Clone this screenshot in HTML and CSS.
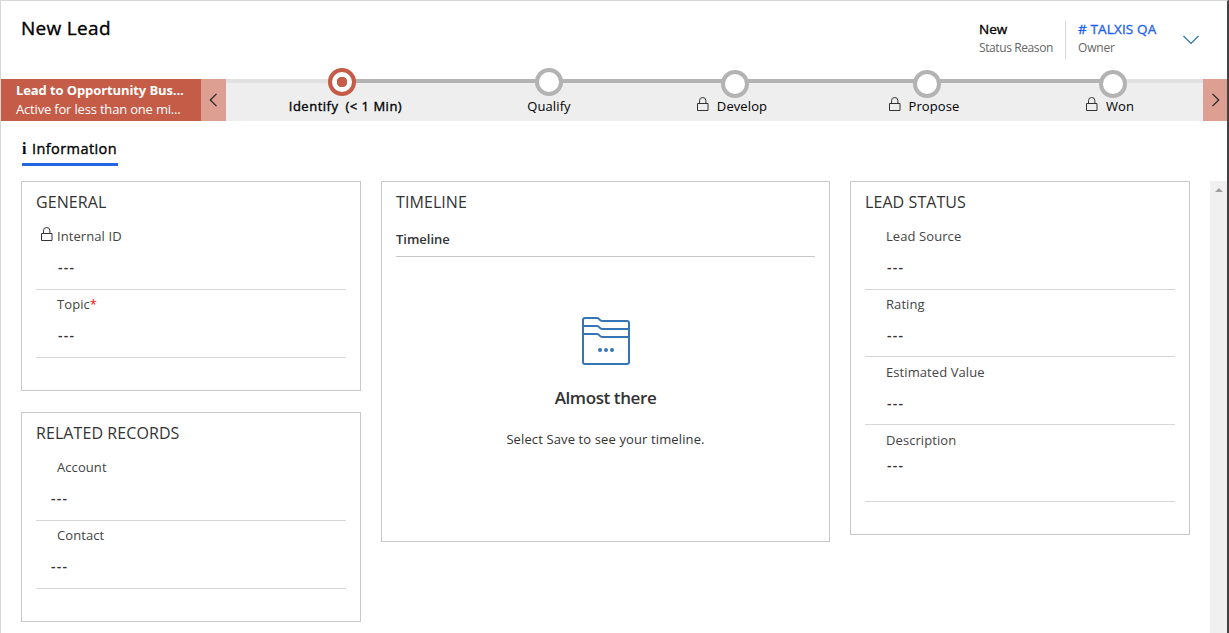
FILE: index.html
```html
<!DOCTYPE html>
<html lang="en">
<head>
<meta charset="utf-8">
<title>New Lead</title>
<link rel="stylesheet" href="styles.css">
</head>
<body>
<svg class="defs" width="0" height="0">
  <symbol id="lock" viewBox="0 0 12 15">
    <path d="M.5 6.500h10.500v7H.5zM2.500 6.500V3.700a3.200 3.200 0 0 1 6.400 0v2.800" fill="none" stroke="currentColor"/>
  </symbol>
</svg>
<div class="page">
  <header class="header">
    <h1 class="title">New Lead</h1>
    <div class="facts">
      <div class="fact fact-status"><span class="fact-value">New</span><span class="fact-label">Status Reason</span></div>
      <div class="fact fact-owner"><a class="fact-value fact-link">#&nbsp;TALXIS QA</a><span class="fact-label">Owner</span></div>
      <svg class="chevron" width="18" height="10" viewBox="0 0 18 10"><path d="M1.500 1 9 8.500 16.500 1" fill="none" stroke="#2a72a8" stroke-width="1.200"/></svg>
    </div>
  </header>

  <section class="process">
    <div class="process-name"><strong class="process-title">Lead to Opportunity Bus...</strong><span class="process-time">Active for less than one mi...</span></div>
    <button class="nav nav-prev"><svg width="9" height="14" viewBox="0 0 9 14"><path d="M7.500.8 1.300 7l6.200 6.200" fill="none" stroke="#222" stroke-width="1.200"/></svg></button>
    <div class="stages">
      <div class="stage stage-active"><span class="dot"></span><span class="stage-label"><span>Identify</span><span class="duration">(&lt; 1 Min)</span></span></div>
      <div class="stage"><span class="dot"></span><span class="stage-label">Qualify</span></div>
      <div class="stage stage-locked"><span class="dot"></span><span class="stage-label"><svg class="lock"><use href="#lock"/></svg>Develop</span></div>
      <div class="stage stage-locked"><span class="dot"></span><span class="stage-label"><svg class="lock"><use href="#lock"/></svg>Propose</span></div>
      <div class="stage stage-locked"><span class="dot"></span><span class="stage-label"><svg class="lock"><use href="#lock"/></svg>Won</span></div>
    </div>
    <button class="nav nav-next"><svg width="9" height="14" viewBox="0 0 9 14"><path d="M1.500.8 7.700 7l-6.200 6.200" fill="none" stroke="#222" stroke-width="1.200"/></svg></button>
  </section>

  <nav class="tabs"><a class="tab"><span class="tab-icon">i</span><span class="tab-text">Information</span></a></nav>

  <main class="content">
    <div class="columns">
      <div class="column">
        <section class="card">
          <h2 class="card-title">GENERAL</h2>
          <div class="field"><div class="label"><svg class="lock"><use href="#lock"/></svg>Internal ID</div><div class="value">---</div></div>
          <div class="field"><div class="label">Topic<span class="required">*</span></div><div class="value">---</div></div>
        </section>
        <section class="card related">
          <h2 class="card-title">RELATED RECORDS</h2>
          <div class="field"><div class="label">Account</div><div class="value">---</div></div>
          <div class="field"><div class="label">Contact</div><div class="value">---</div></div>
        </section>
      </div>
      <section class="card timeline">
        <h2 class="card-title">TIMELINE</h2>
        <h3 class="timeline-heading">Timeline</h3>
        <div class="empty">
          <svg width="48" height="48" viewBox="0 0 48 48" fill="none" stroke="#3575b5" stroke-width="2">
            <path d="M1 45V3q0-2 2-2h12q1.500 0 2.500 1.500T20.500 4H45q2 0 2 2v39q0 2-2 2H3q-2 0-2-2zM1 9h14q1.500 0 2.500 1.500T20.500 12H47M1 17h14q1.500 0 2.500 1.500T20.500 20H47"/>
            <g fill="#3575b5" stroke="none"><circle cx="18" cy="33" r="2"/><circle cx="24" cy="33" r="2"/><circle cx="30" cy="33" r="2"/></g>
          </svg>
          <strong class="empty-title">Almost there</strong>
          <span class="empty-text">Select Save to see your timeline.</span>
        </div>
      </section>
      <section class="card status">
        <h2 class="card-title">LEAD STATUS</h2>
        <div class="field"><div class="label">Lead Source</div><div class="value">---</div></div>
        <div class="field field-short"><div class="label">Rating</div><div class="value">---</div></div>
        <div class="field field-low"><div class="label">Estimated Value</div><div class="value">---</div></div>
        <div class="field field-low field-long"><div class="label">Description</div><div class="value">---</div></div>
      </section>
    </div>
    <div class="scrollbar"><svg width="8" height="4" viewBox="0 0 8 4"><path d="M0 4 4 0l4 4z" fill="#a0a0a0"/></svg></div>
  </main>
</div>
</body>
</html>
```
FILE: styles.css
```css
* { box-sizing: border-box; }
body { margin: 0; font-family: "Open Sans", "Noto Sans", sans-serif; font-size: 13px; color: #333; background: #fff; }
h1, h2, h3 { margin: 0; }
.defs { display: none; }
.page { width: 1229px; height: 633px; overflow: hidden; display: flex; flex-direction: column; border-top: 1px solid #d6d6d6; border-left: 1px solid #d6d6d6; border-right: 2px solid #434040; }

.header { height: 78px; flex: none; display: flex; justify-content: space-between; padding: 13px 27px 0 20px; }
.title { font-size: 19px; font-weight: 400; -webkit-text-stroke: 0.350px #000; line-height: 28px; color: #000; letter-spacing: 0.300px; }
.facts { display: flex; height: 45px; }
.fact { display: flex; flex-direction: column; padding-top: 6px; white-space: nowrap; }
.fact-status { width: 86px; }
.fact-owner { width: 117px; padding: 0 0 0 12px; border-left: 1px solid #d6d6d6; margin-top: 7px; height: 38px; }
.fact-value { font-weight: 400; -webkit-text-stroke: 0.350px currentColor; font-size: 13.500px; color: #000; line-height: 18px; }
.fact-owner .fact-value { margin-top: -1px; }
.fact-link { color: #1f62f0; letter-spacing: 0.150px; }
.fact-label { font-size: 12px; color: #666; line-height: 18px; margin-top: 1px; letter-spacing: -0.400px; }
.fact-owner .fact-label { letter-spacing: -0.200px; }
.chevron { margin-top: 21px; }

.process { height: 42px; flex: none; display: flex; background: #eee; }
.process-name { width: 200px; padding: 1px 0 0 15px; background: #c45c48; color: #fff; display: flex; flex-direction: column; line-height: 19px; white-space: nowrap; }
.process-title { font-weight: 700; font-size: 13px; line-height: 20px; letter-spacing: -0.100px; }
.process-time { font-size: 13px; letter-spacing: -0.180px; }
.nav { border: 0; padding: 0; background: #dc9f92; display: flex; align-items: center; justify-content: center; }
.nav-prev { width: 25px; padding-right: 1px; }
.nav-next { width: 24px; }
.stages { flex: 1; display: grid; grid-template-columns: 232px 182px 190px 194px 178px; color: #000;
  background: linear-gradient(#b3b3b3, #b3b3b3) 116px 0 / 771px 4px no-repeat, linear-gradient(#e1e1e1, #e1e1e1) 0 0 / 100% 4px no-repeat; }
.stage { display: flex; flex-direction: column; align-items: center; margin-top: -11px; height: 53px; }
.dot { width: 28px; height: 28px; flex: none; border: 4px solid #b3b3b3; border-radius: 50%; background: #fff; }
.stage-active .dot { border-color: #c45c48; background: radial-gradient(circle, #c45c48 5px, #fff 5.500px); }
.stage-label { display: flex; line-height: 20px; white-space: nowrap; letter-spacing: 0.100px; }
.stage-locked { margin-top: -9px; }
.stage-locked .stage-label { margin-top: -2px; padding-right: 6px; }
.stage-active .stage-label { -webkit-text-stroke: 0.350px #000; letter-spacing: 0.500px; padding-left: 7px; }
.duration { margin-left: 7px; }
.lock { width: 12px; height: 15px; color: #333; }
.stage .lock { margin: 1px 8px 0 0; }

.tabs { height: 60px; flex: none; padding: 16px 0 0 21px; }
.tab { display: inline-flex; align-items: center; width: 96px; height: 29px; border-bottom: 3px solid #2266e3; color: #000; font-size: 14.500px; line-height: 24px; padding-bottom: 2px; }
.tab-icon { font-family: "Liberation Serif", serif; font-weight: 700; font-size: 16px; width: 10px; flex: none; }
.tab-text { white-space: nowrap; letter-spacing: 0.420px; -webkit-text-stroke: 0.350px #000; }

.content { flex: 1; display: flex; justify-content: space-between; }
.columns { display: grid; grid-template-columns: 340px 449px 340px; gap: 20px; padding-left: 20px; align-items: start; }
.column { display: grid; gap: 21px; }
.card { border: 1px solid #c8c8c8; padding: 0 14px; height: 210px; }
.timeline { height: 361px; }
.status { height: 354px; }
.card-title { font-size: 16px; font-weight: 400; line-height: 41px; height: 40px; white-space: nowrap; letter-spacing: 0.080px; }
.field { height: 68px; border-bottom: 1px solid #d6d6d6; padding: 4px 0 0 21px; }
.field-short { height: 67px; }
.field-low { padding-top: 5px; }
.label { display: flex; line-height: 20px; color: #444; letter-spacing: 0.080px; }
.label .lock { margin: 1px 4px 0 -16px; }
.required { color: #e81010; }
.value { line-height: 42px; padding-left: 1px; font-size: 14px; font-weight: 600; letter-spacing: 1.200px; height: 43px; }
.field-long { height: 77px; }
.field-long .value { line-height: 30px; }
.related .value { margin-left: -7px; }
.timeline-heading { font-size: 13px; font-weight: 600; height: 35px; line-height: 35px; border-bottom: 1px solid #c8c8c8; }
.empty { display: flex; flex-direction: column; align-items: center; padding-top: 60px; }
.empty-title { font-size: 17px; font-weight: 600; line-height: 26px; margin-top: 20px; letter-spacing: -0.400px; }
.empty-text { line-height: 20px; margin-top: 18px; letter-spacing: 0.120px; }
.scrollbar { width: 17px; background: #f0f0f0; display: flex; justify-content: center; padding-top: 7px; }
```
